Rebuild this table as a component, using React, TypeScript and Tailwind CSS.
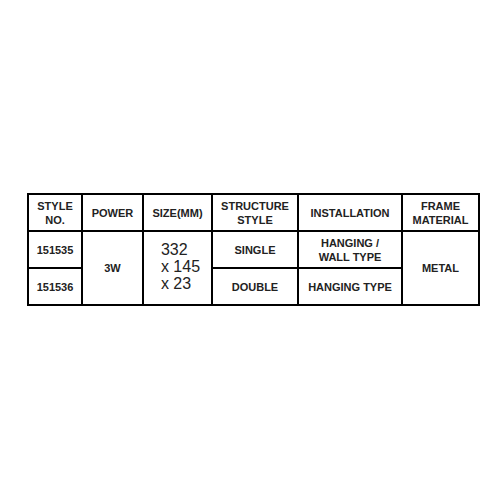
import React from 'react';

const cell = 'border-[2.5px] border-black text-center align-middle font-bold text-[11px] leading-[14px] px-1';

export default function App() {
  return (
    <div
      className="w-[500px] h-[500px] bg-white pt-[193px] pl-[27px] text-[#222]"
      style={{ fontFamily: '"Liberation Sans", Arial, sans-serif' }}
    >
      <table className="table-fixed border-collapse w-[451px]">
        <colgroup>
          <col className="w-[54px]" />
          <col className="w-[61px]" />
          <col className="w-[69px]" />
          <col className="w-[86px]" />
          <col className="w-[104px]" />
          <col className="w-[77px]" />
        </colgroup>
        <tbody>
          <tr className="h-[37px]">
            <td className={cell}>STYLE<br />NO.</td>
            <td className={cell}>POWER</td>
            <td className={cell}>SIZE(MM)</td>
            <td className={cell}>STRUCTURE<br />STYLE</td>
            <td className={cell}>INSTALLATION</td>
            <td className={cell}>FRAME<br />MATERIAL</td>
          </tr>
          <tr className="h-[37px]">
            <td className={cell}>151535</td>
            <td className={cell} rowSpan={2}>3W</td>
            <td className="border-[2.5px] border-black text-center align-middle" rowSpan={2}>
              <div className="inline-block text-left text-[16px] leading-[17px] pl-[6px]">
                332<br />x 145<br />x 23
              </div>
            </td>
            <td className={cell}>SINGLE</td>
            <td className={cell}>HANGING /<br />WALL TYPE</td>
            <td className={cell} rowSpan={2}>METAL</td>
          </tr>
          <tr className="h-[37px]">
            <td className={cell}>151536</td>
            <td className={cell}>DOUBLE</td>
            <td className={cell}>HANGING TYPE</td>
          </tr>
        </tbody>
      </table>
    </div>
  );
}
